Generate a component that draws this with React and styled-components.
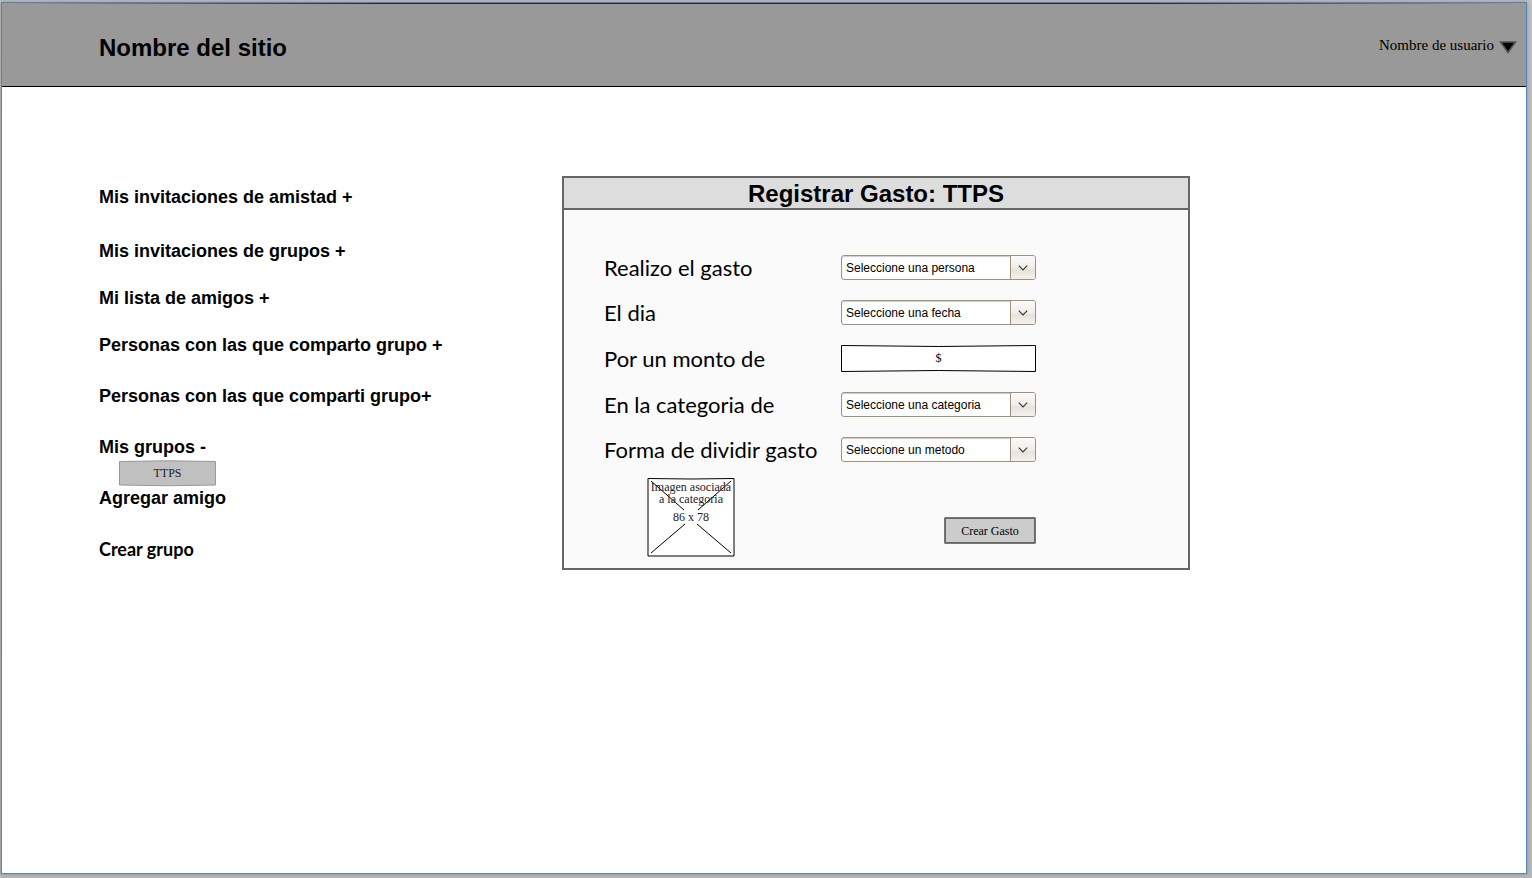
import React from "react";
import styled, { createGlobalStyle } from "styled-components";

const sans = '"Liberation Sans", Arial, sans-serif';
const serif = '"Liberation Serif", "Times New Roman", serif';
const lato = 'Lato, sans-serif';

const GlobalStyle = createGlobalStyle`
  *, *::before, *::after { box-sizing: border-box; }
  body { margin: 0; color: #000; font-family: ${sans}; }
  h1, h2, p, figure { margin: 0; }
  button, input, select { margin: 0; color: inherit; }
`;

const Desktop = styled.div`
  min-height: 100vh;
  display: flex;
  padding: 2px 5px 4px 1px;
  background: linear-gradient(to bottom, #c0c0c0, #b8b8b8);
`;

const Frame = styled.div`
  flex: 1;
  min-width: 0;
  border: 1px solid #4f86bd;
  background: #fff;
  box-shadow: 0 0 4px rgba(0, 0, 0, 0.25);
`;

const Header = styled.header`
  position: relative;
  display: flex;
  align-items: center;
  justify-content: space-between;
  height: 84px;
  padding: 6px 9px 0 97px;
  border-bottom: 1px solid #000;
  background: #999;
`;

const HeaderEdge = styled.svg`
  position: absolute;
  top: 0;
  left: 0;
  width: 100%;
  height: 2px;
`;

const SiteName = styled.h1`
  font-size: 24px;
  line-height: 28px;
`;

const UserButton = styled.button`
  display: flex;
  align-items: flex-start;
  gap: 5px;
  padding: 0 0 6px;
  border: 0;
  background: none;
  font: 15px/18px ${serif};

  svg {
    margin-top: 4px;
  }
`;

const Main = styled.main`
  display: grid;
  grid-template-columns: 463px minmax(0, 628px);
  align-items: start;
  padding: 89px 20px 40px 97px;
`;

const Sidebar = styled.nav`
  display: flex;
  flex-direction: column;
  align-items: flex-start;
  padding-top: 11px;
`;

const gaps = { wide: 34, normal: 31, snug: 27, none: 2 };

const SideLink = styled.a`
  margin-bottom: ${(p) => gaps[p.$gap || "normal"]}px;
  color: #000;
  font: bold 18px/20px ${(p) => (p.$lato ? lato : sans)};
  text-decoration: none;
`;

const Sketch = styled.svg`
  position: absolute;
  inset: 0;
  width: 100%;
  height: 100%;
  overflow: visible;
  pointer-events: none;
`;

const GroupButton = styled.button`
  position: relative;
  width: 97px;
  height: 25px;
  margin: 2px 0 2px 20px;
  padding: 0 0 2px;
  border: 0;
  background: none;
  font: 12px/14px ${serif};
  color: #222;
`;

const Over = styled.span`
  position: relative;
`;

const Panel = styled.section`
  border: 2px solid #666;
  background: #fafafa;
`;

const PanelTitle = styled.h2`
  padding-top: 2px;
  border-bottom: 2px solid #666;
  background: #ddd;
  font-size: 24px;
  line-height: 28px;
  text-align: center;
`;

const Form = styled.form`
  display: flex;
  flex-direction: column;
  gap: 20px;
  padding: 45px 20px 11px 40px;
`;

const Field = styled.div`
  display: grid;
  grid-template-columns: 237px 195px;
  align-items: center;
`;

const Label = styled.label`
  font: 22px/24px ${lato};
`;

const SelectBox = styled.div`
  position: relative;
  height: 25px;
`;

const Select = styled.select`
  appearance: none;
  display: block;
  width: 100%;
  height: 100%;
  padding: 0 28px 0 4px;
  border: 1px solid #a09080;
  border-radius: 3px;
  background: #fff;
  box-shadow: inset 0 1px 1px rgba(0, 0, 0, 0.2);
  font: 12px/14px ${sans};
`;

const SelectArrow = styled.span`
  position: absolute;
  inset: 1px 1px 1px auto;
  display: flex;
  align-items: center;
  justify-content: center;
  width: 25px;
  border-left: 1px solid #a09080;
  border-radius: 0 2px 2px 0;
  background: linear-gradient(to bottom, #fbfaf9 0%, #f1efea 50%, #e7e3da 60%, #f4f2ee 100%);
  pointer-events: none;
`;

const AmountBox = styled.div`
  position: relative;
  height: 27px;
`;

const Amount = styled.input`
  position: relative;
  display: block;
  width: 100%;
  height: 100%;
  padding: 0 4px;
  border: 0;
  background: none;
  font: 12px/14px ${serif};
  text-align: center;
`;

const FormFooter = styled.div`
  display: flex;
  align-items: flex-end;
  justify-content: space-between;
  width: 389px;
  margin: -4px 0 0 43px;
`;

const Placeholder = styled.figure`
  position: relative;
  width: 88px;
  height: 79px;
  padding-top: 3px;
  color: #222;
  font: 12px/12px ${serif};
  text-align: center;
  white-space: nowrap;
`;

const Caption = styled.figcaption`
  position: relative;
`;

const Size = styled.p`
  position: relative;
  margin-top: 6px;
`;

const SubmitButton = styled.button`
  width: 92px;
  height: 27px;
  margin-bottom: 13px;
  padding: 0;
  border: 1px solid #777;
  border-radius: 1px;
  background: #ccc;
  box-shadow: inset 0 0 0 1px #666;
  font: 12px/14px ${serif};
`;

function SelectField({ id, label, placeholder }) {
  return (
    <Field>
      <Label htmlFor={id}>{label}</Label>
      <SelectBox>
        <Select id={id} name={id} defaultValue="">
          <option value="">{placeholder}</option>
        </Select>
        <SelectArrow>
          <svg width="10" height="6" viewBox="0 0 10 6" aria-hidden="true">
            <path d="M0.8 0.6 L5 4.9 L9.2 0.6" fill="none" stroke="#333" strokeWidth="1.1" />
          </svg>
        </SelectArrow>
      </SelectBox>
    </Field>
  );
}

export default function App() {
  return (
    <>
      <GlobalStyle />
      <Desktop>
        <Frame>
          <Header>
            <HeaderEdge viewBox="0 0 100 2" preserveAspectRatio="none" aria-hidden="true">
              <path d="M0 0 Q50 1.7 100 0 Z" fill="#000" />
            </HeaderEdge>
            <SiteName>Nombre del sitio</SiteName>
            <UserButton type="button">
              Nombre de usuario
              <svg width="18" height="14" viewBox="0 0 18 14" aria-hidden="true">
                <path d="M1.5 2 H16.5 L9 12.5 Z" fill="#000" stroke="#555" strokeWidth="1.6" />
              </svg>
            </UserButton>
          </Header>
          <Main>
            <Sidebar>
              <SideLink href="#invitaciones" $gap="wide">Mis invitaciones de amistad +</SideLink>
              <SideLink href="#invitaciones-grupos" $gap="snug">Mis invitaciones de grupos +</SideLink>
              <SideLink href="#amigos" $gap="snug">Mi lista de amigos +</SideLink>
              <SideLink href="#comparto">Personas con las que comparto grupo +</SideLink>
              <SideLink href="#comparti">Personas con las que comparti grupo+</SideLink>
              <SideLink href="#grupos" $gap="none">Mis grupos -</SideLink>
              <GroupButton type="button">
                <Sketch viewBox="0 0 97 25" aria-hidden="true">
                  <path d="M0.5 0.5 Q48 -1 96.5 0.5 V24 Q48 25.5 0.5 24 Z" fill="#c0c0c0" stroke="#999" />
                </Sketch>
                <Over>TTPS</Over>
              </GroupButton>
              <SideLink href="#agregar">Agregar amigo</SideLink>
              <SideLink href="#crear" $lato>Crear grupo</SideLink>
            </Sidebar>
            <Panel>
              <PanelTitle>Registrar Gasto: TTPS</PanelTitle>
              <Form onSubmit={(e) => e.preventDefault()}>
                <SelectField id="persona" label="Realizo el gasto" placeholder="Seleccione una persona" />
                <SelectField id="fecha" label="El dia" placeholder="Seleccione una fecha" />
                <Field>
                  <Label htmlFor="monto">Por un monto de</Label>
                  <AmountBox>
                    <Sketch viewBox="0 0 195 27" aria-hidden="true">
                      <path d="M0.5 0.5 Q97 2.5 194.5 0.5 V26.5 Q97 24.5 0.5 26.5 Z" fill="#fff" stroke="#000" />
                    </Sketch>
                    <Amount id="monto" name="monto" defaultValue="$" />
                  </AmountBox>
                </Field>
                <SelectField id="categoria" label="En la categoria de" placeholder="Seleccione una categoria" />
                <SelectField id="metodo" label="Forma de dividir gasto" placeholder="Seleccione un metodo" />
                <FormFooter>
                  <Placeholder>
                    <Sketch viewBox="0 0 88 79" aria-hidden="true">
                      <path d="M1 0.5 Q44 1.5 87 0.5 V78 H1 Z" fill="#fff" stroke="#000" />
                      <path d="M4 3 L37 32 M84 3 L51 32 M4 75 L38 46 M84 75 L50 46" stroke="#000" />
                    </Sketch>
                    <Caption>
                      Imagen asociada
                      <br />a la categoria
                    </Caption>
                    <Size>86 x 78</Size>
                  </Placeholder>
                  <SubmitButton type="submit">Crear Gasto</SubmitButton>
                </FormFooter>
              </Form>
            </Panel>
          </Main>
        </Frame>
      </Desktop>
    </>
  );
}
